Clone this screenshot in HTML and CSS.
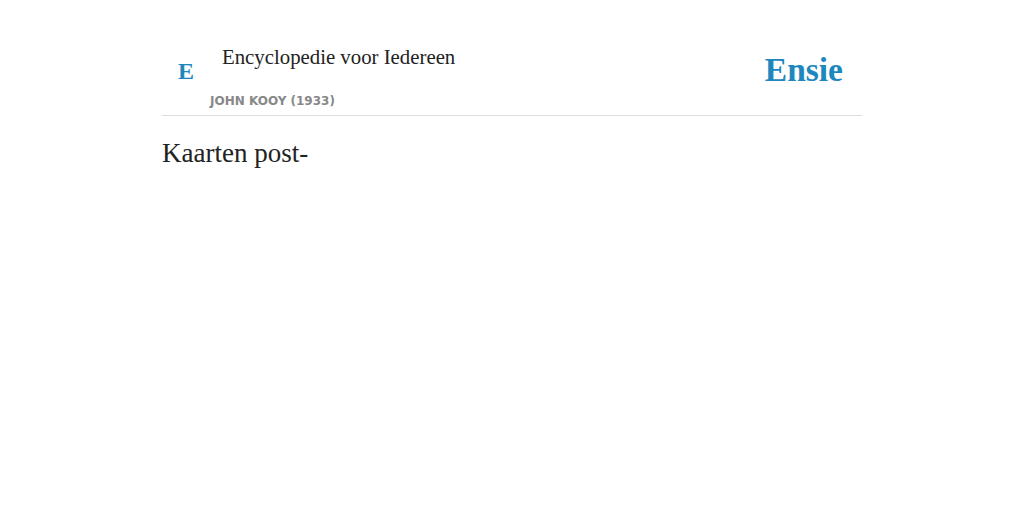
FILE: index.html
```html
<!DOCTYPE html>
<html lang="nl">
<head>
    <meta charset="UTF-8">
    <title>Kaarten post- - Encyclopedie voor Iedereen</title>
    <link rel="stylesheet" href="styles.css">
</head>
<body>
    <div class="page">
        <header class="top">
            <div class="source">
                <div class="source-row">
                    <span class="source-logo">E</span>
                    <span class="source-title">Encyclopedie voor Iedereen</span>
                </div>
                <div class="source-author">JOHN KOOY (1933)</div>
            </div>
            <div class="brand">Ensie</div>
        </header>
        <h1 class="term">Kaarten post-</h1>
    </div>
</body>
</html>
```

FILE: styles.css
```css
body {
    margin: 0;
    background: #fff;
    color: #222;
    font-family: "Liberation Serif", serif;
}
.page {
    width: 700px;
    margin: 0 auto;
    padding-top: 42px;
}
.top {
    display: flex;
    justify-content: space-between;
    align-items: flex-start;
    border-bottom: 1px solid #ddd;
    padding-bottom: 6px;
}
.source-row {
    display: flex;
    align-items: flex-start;
}
.source-logo {
    width: 60px;
    padding-left: 16px;
    padding-top: 14px;
    box-sizing: border-box;
    color: #1e88be;
    font-weight: bold;
    font-size: 24px;
    line-height: 30px;
}
.source-title {
    font-size: 20.8px;
    line-height: 30px;
}
.source-author {
    margin-top: 7px;
    padding-left: 48px;
    font-family: "DejaVu Sans", sans-serif;
    font-weight: bold;
    font-size: 12px;
    color: #888;
    line-height: 16px;
}
.brand {
    margin-top: 9px;
    margin-right: 19px;
    color: #1e88be;
    font-weight: bold;
    font-size: 33.5px;
    line-height: 38px;
}
.term {
    margin: 21px 0 0;
    font-weight: normal;
    font-size: 27px;
    line-height: 32px;
}
```
